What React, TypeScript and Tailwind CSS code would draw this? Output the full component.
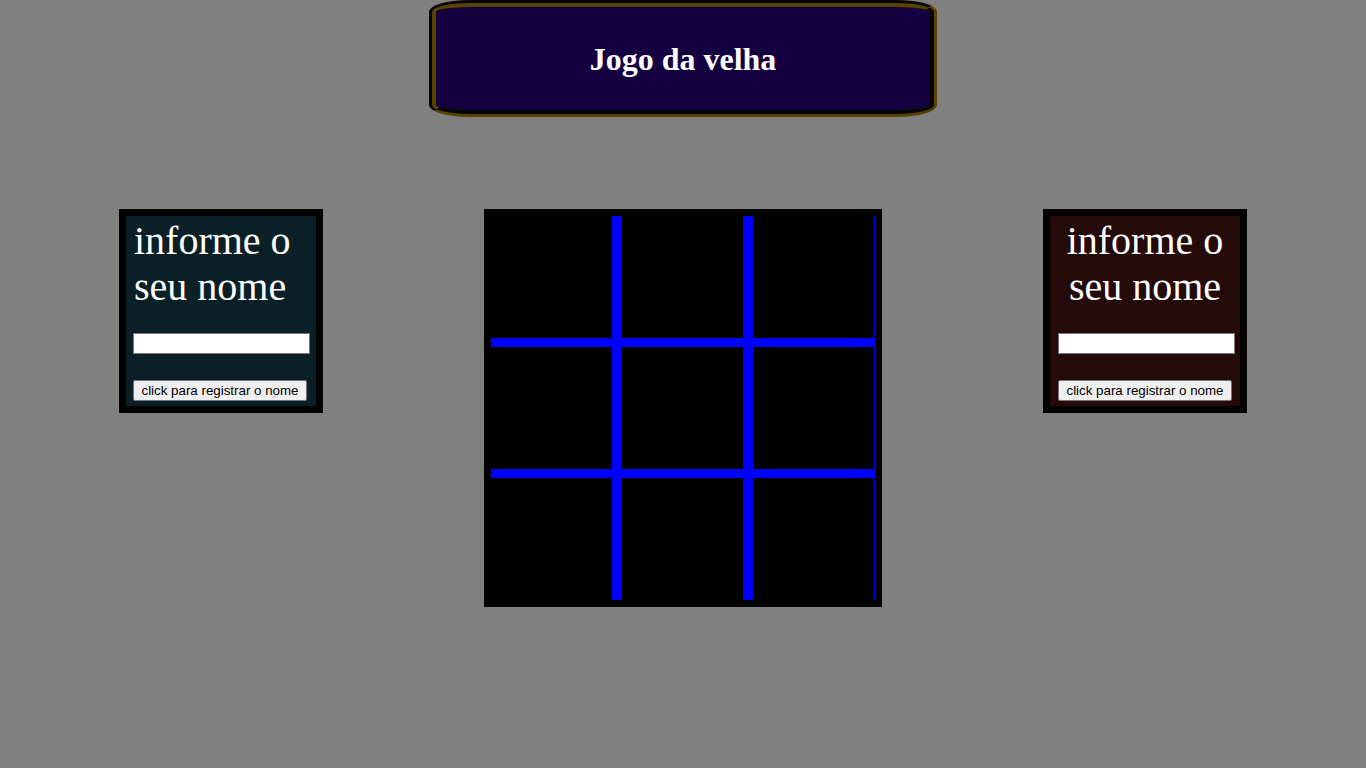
function PlayerBox({ bg, center }: { bg: string; center?: boolean }) {
  return (
    <div className={`h-[204px] w-[204px] border-[7px] border-black ${bg}`}>
      <div className={`flex h-full flex-col ${center ? "items-center" : "items-start"} px-[7px] pt-[2px]`}>
        <p
          className={`font-['Liberation_Serif',serif] text-[40px] leading-[46px] text-white ${
            center ? "text-center" : "pl-[1px]"
          }`}
        >
          informe o<br />
          seu nome
        </p>
        <input
          type="text"
          className={`mt-[23px] h-[21px] w-[177px] border border-[#767676] bg-white px-[2px] text-[13px] outline-none ${
            center ? "ml-[2px]" : ""
          }`}
        />
        <button className="mt-[26px] h-[21px] w-[174px] rounded-[2px] border border-[#767676] bg-[#efefef] font-['Liberation_Sans',Arial,sans-serif] text-[13.33px] leading-none text-black">
          click para registrar o nome
        </button>
      </div>
    </div>
  );
}

function Row() {
  return (
    <div className="flex h-[122px]">
      <div className="w-[121px]" />
      <div className="w-[10px] bg-[#0000ff]" />
      <div className="w-[121px]" />
      <div className="w-[10px] bg-[#0000ff]" />
      <div className="w-[121px]" />
      <div className="w-[1px] bg-[#0000ff]" />
    </div>
  );
}

function Board() {
  return (
    <div className="h-[398px] w-[398px] border-[7px] border-black bg-black">
      <div className="flex w-[384px] flex-col">
        <Row />
        <div className="h-[9px] bg-[#0000ff]" />
        <Row />
        <div className="h-[9px] bg-[#0000ff]" />
        <Row />
      </div>
    </div>
  );
}

export default function App() {
  return (
    <div className="min-h-screen bg-[#808080]">
      <header className="mx-auto flex h-[117px] w-[508px] items-center justify-center rounded-[40px/12px] border-[7px] border-[#5a4300] bg-[#140040] [border-style:groove]">
        <h1 className="font-['Liberation_Serif',serif] text-[32px] font-bold text-white">Jogo da velha</h1>
      </header>
      <main className="mt-[92px] flex items-start justify-center gap-[161px]">
        <PlayerBox bg="bg-[#0a1f26]" />
        <Board />
        <PlayerBox bg="bg-[#250a0a]" center />
      </main>
    </div>
  );
}
